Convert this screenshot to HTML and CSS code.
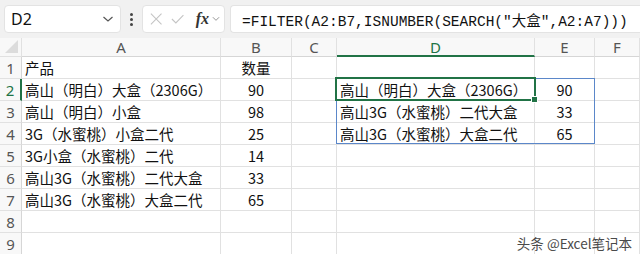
FILE: index.html
```html
<!DOCTYPE html>
<html lang="zh-CN">

<head>
	<meta charset="utf-8">
	<title>FILTER 大盒</title>
	<link rel="stylesheet" href="styles.css">
</head>

<body>

	<!-- formula bar -->
	<div class="formula-bar">
		<div class="name-box">
			<span class="name-text">D2</span>
			<svg class="chev" width="12" height="8" viewBox="0 0 12 8"><path d="M1.5 2 L6 6 L10.5 2" fill="none" stroke="#555" stroke-width="1.2"/></svg>
		</div>
		<div class="grip"><i></i><i></i><i></i></div>
		<div class="fx-box">
			<svg width="14" height="14" viewBox="0 0 14 14"><path d="M1 1 L13 13 M13 1 L1 13" stroke="#c4c4c4" stroke-width="1.2"/></svg>
			<svg width="15" height="12" viewBox="0 0 15 12"><path d="M1 6 L5.5 10.5 L14 1.5" fill="none" stroke="#c4c4c4" stroke-width="1.2"/></svg>
			<span class="fx">fx</span>
			<svg width="9" height="6" viewBox="0 0 9 6"><path d="M1 1 L4.5 4.5 L8 1" fill="none" stroke="#888" stroke-width="1"/></svg>
		</div>
		<div class="formula-input">=FILTER(A2:B7,ISNUMBER(SEARCH("大盒",A2:A7)))</div>
	</div>

	<!-- sheet -->
	<div class="sheet">
		<div class="grid">
			<div class="hd corner"><span class="tri"></span></div>
			<div class="hd col">A</div>
			<div class="hd col">B</div>
			<div class="hd col">C</div>
			<div class="hd col on">D</div>
			<div class="hd col">E</div>
			<div class="hd col">F</div>

			<div class="hd row">1</div>
			<div class="c">产品</div>
			<div class="c mid">数量</div>
			<div class="c"></div>
			<div class="c"></div>
			<div class="c"></div>
			<div class="c"></div>

			<div class="hd row on">2</div>
			<div class="c">高山（明白）大盒（2306G）</div>
			<div class="c mid">90</div>
			<div class="c"></div>
			<div class="c">高山（明白）大盒（2306G）</div>
			<div class="c mid">90</div>
			<div class="c"></div>

			<div class="hd row">3</div>
			<div class="c">高山（明白）小盒</div>
			<div class="c mid">98</div>
			<div class="c"></div>
			<div class="c">高山3G（水蜜桃）二代大盒</div>
			<div class="c mid">33</div>
			<div class="c"></div>

			<div class="hd row">4</div>
			<div class="c">3G（水蜜桃）小盒二代</div>
			<div class="c mid">25</div>
			<div class="c"></div>
			<div class="c">高山3G（水蜜桃）大盒二代</div>
			<div class="c mid">65</div>
			<div class="c"></div>

			<div class="hd row">5</div>
			<div class="c">3G小盒（水蜜桃）二代</div>
			<div class="c mid">14</div>
			<div class="c"></div>
			<div class="c"></div>
			<div class="c"></div>
			<div class="c"></div>

			<div class="hd row">6</div>
			<div class="c">高山3G（水蜜桃）二代大盒</div>
			<div class="c mid">33</div>
			<div class="c"></div>
			<div class="c"></div>
			<div class="c"></div>
			<div class="c"></div>

			<div class="hd row">7</div>
			<div class="c">高山3G（水蜜桃）大盒二代</div>
			<div class="c mid">65</div>
			<div class="c"></div>
			<div class="c"></div>
			<div class="c"></div>
			<div class="c"></div>

			<div class="hd row">8</div>
			<div class="c"></div>
			<div class="c"></div>
			<div class="c"></div>
			<div class="c"></div>
			<div class="c"></div>
			<div class="c"></div>

			<div class="hd row">9</div>
			<div class="c"></div>
			<div class="c"></div>
			<div class="c"></div>
			<div class="c"></div>
			<div class="c"></div>
			<div class="c"></div>
		</div>

		<!-- spill range D2:E4 and the active cell D2 -->
		<div class="spill"></div>
		<div class="active"><span class="handle"></span></div>

		<div class="watermark">头条 @Excel笔记本</div>
	</div>

</body>

</html>
```

FILE: styles.css
```css
body {
	margin: 0;
	width: 640px;
	height: 254px;
	overflow: hidden;
	background: #fff;
	font-family: "Noto Sans CJK SC", "Noto Sans", sans-serif;
	color: #111;
}

/* formula bar */
.formula-bar {
	display: flex;
	align-items: center;
	height: 38px;
	padding: 0 0 0 4px;
	box-sizing: border-box;
	background: #f1f1f1;
}

.name-box {
	display: flex;
	align-items: center;
	justify-content: space-between;
	width: 117px;
	height: 28px;
	box-sizing: border-box;
	padding: 0 6px 0 6px;
	background: #fff;
	border: 1px solid #e3e3e3;
	border-radius: 4px;
}

.name-text {
	font-family: "Noto Sans", sans-serif;
	font-size: 16px;
	color: #111;
}

.grip {
	display: flex;
	flex-direction: column;
	gap: 2px;
	width: 21px;
	align-items: center;
}

.grip i {
	display: block;
	width: 3px;
	height: 3px;
	border-radius: 50%;
	background: #444;
}

.fx-box {
	display: flex;
	align-items: center;
	gap: 9px;
	width: 83px;
	height: 28px;
	box-sizing: border-box;
	padding: 0 4px 0 7px;
	background: #fff;
	border: 1px solid #e3e3e3;
	border-radius: 4px;
}

.fx {
	font-family: "Liberation Serif", serif;
	font-style: italic;
	font-weight: bold;
	font-size: 16px;
	color: #333;
	margin-left: 2px;
	margin-right: -6px;
}

.formula-input {
	flex: 1;
	height: 28px;
	margin-left: 5px;
	box-sizing: border-box;
	padding: 0 0 0 11px;
	display: flex;
	align-items: center;
	background: #fff;
	border: 1px solid #e3e3e3;
	border-right: none;
	border-radius: 4px 0 0 4px;
	font-family: "Liberation Mono", "Noto Sans CJK SC", monospace;
	font-size: 14.5px;
	color: #111;
	white-space: nowrap;
}

/* sheet */
.sheet {
	position: relative;
}

.grid {
	display: grid;
	grid-template-columns: 22px 199px 71px 45px 198px 60px 45px;
	grid-template-rows: 19px;
	grid-auto-rows: 22px;
}

.grid > div {
	box-sizing: border-box;
	border-right: 1px solid #e1e1e1;
	border-bottom: 1px solid #e1e1e1;
	white-space: nowrap;
	overflow: hidden;
}

.hd {
	background: #f8f8f8;
	color: #555;
	font-family: "Noto Sans", sans-serif;
	font-size: 15px;
	display: flex;
	align-items: center;
	justify-content: center;
}

.grid > .hd.col {
	border-bottom-color: #d6d6d6;
}

.grid > .hd.row {
	border-right-color: #d6d6d6;
}

.grid > .hd.col.on {
	color: #217346;
	border-bottom: 2px solid #217346;
}

.grid > .hd.row.on {
	color: #217346;
	border-right: 2px solid #217346;
}

.corner {
	position: relative;
}

.tri {
	position: absolute;
	right: 3px;
	bottom: 3px;
	width: 0;
	height: 0;
	border-left: 13px solid transparent;
	border-bottom: 13px solid #dcdcdc;
}

.c {
	display: flex;
	align-items: center;
	padding-left: 3px;
	font-size: 14.5px;
}

.c.mid {
	justify-content: center;
	padding-left: 0;
}

.spill {
	position: absolute;
	left: 336px;
	top: 40px;
	width: 259px;
	height: 66px;
	box-sizing: border-box;
	border: 1px solid #5b87c9;
}

.active {
	position: absolute;
	left: 335px;
	top: 39px;
	width: 201px;
	height: 24px;
	box-sizing: border-box;
	border: 2px solid #217346;
}

.handle {
	position: absolute;
	right: -4px;
	bottom: -4px;
	width: 5px;
	height: 5px;
	background: #217346;
	border: 1px solid #fff;
}

.watermark {
	position: absolute;
	right: 8px;
	bottom: 2px;
	font-size: 13.5px;
	color: #4a4a4a;
	text-shadow: 0 0 2px #fff, 0 0 2px #fff;
}
```
